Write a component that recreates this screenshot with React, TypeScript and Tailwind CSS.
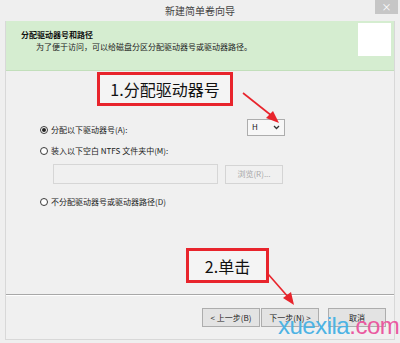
import React from "react";

const Radio = ({ checked }: { checked?: boolean }) => (
  <span className="w-[8px] h-[8px] rounded-full border border-[#3a3a3a] bg-white flex items-center justify-center shrink-0">
    {checked && <span className="w-[4px] h-[4px] rounded-full bg-[#222]" />}
  </span>
);

const Btn = ({ children, className = "" }: { children: React.ReactNode; className?: string }) => (
  <div
    className={
      "w-[58px] h-[19px] border border-[#adadad] bg-[#e3e3e3] flex items-center justify-center text-[8px] text-[#222] " +
      className
    }
  >
    {children}
  </div>
);

export default function App() {
  return (
    <div className="relative w-[400px] h-[343px] overflow-hidden bg-[#efefef] font-['Noto_Sans_CJK_SC','Noto_Sans',sans-serif] flex flex-col">
      {/* title bar */}
      <div className="relative h-[21px] shrink-0 flex items-center justify-center text-[10px] text-[#444]">
        新建简单卷向导
        <div className="absolute right-[2px] top-0 w-[23px] h-[14px] bg-[#c6c6c6] flex items-center justify-center text-white text-[10px] leading-none">
          ×
        </div>
      </div>

      {/* window body */}
      <div className="mx-[5px] mb-[3px] flex-1 flex flex-col border border-[#d8d8d8] border-t-0 bg-[#f0f0f0]">
        {/* header */}
        <div className="h-[50px] shrink-0 bg-[#d5edd0] border-b border-[#c2dfbb] flex justify-between pr-[3px] pt-[2px]">
          <div className="pl-[15px] pt-[7px] flex flex-col gap-[2px]">
            <div className="text-[8px] font-bold text-[#111] leading-[10px]">分配驱动器号和路径</div>
            <div className="pl-[15px] text-[8px] text-[#222] leading-[10px]">
              为了便于访问，可以给磁盘分区分配驱动器号或驱动器路径。
            </div>
          </div>
          <div className="w-[33px] h-[33px] bg-white" />
        </div>

        {/* content */}
        <div className="flex-1 pl-[34px] pt-[50px] flex flex-col text-[8px] text-[#222]">
          <div className="flex items-center h-[18px]">
            <Radio checked />
            <span className="ml-[3px] w-[196px]">分配以下驱动器号(A):</span>
            <div className="-mt-[6px] w-[38px] h-[17px] border border-[#adadad] bg-[#f7f7f7] flex items-center justify-between px-[4px] text-[8px]">
              <span>H</span>
              <svg width="7" height="5" viewBox="0 0 7 5">
                <path d="M1 1 L3.5 3.5 L6 1" stroke="#333" strokeWidth="1.3" fill="none" />
              </svg>
            </div>
          </div>
          <div className="flex items-center h-[10px] mt-[7px]">
            <Radio />
            <span className="ml-[3px]">装入以下空白 NTFS 文件夹中(M):</span>
          </div>
          <div className="flex items-center mt-[8px] pl-[13px] gap-[7px]">
            <div className="w-[165px] h-[20px] border border-[#d6d6d6] bg-[#f0f0f0]" />
            <div className="w-[58px] h-[19px] border border-[#d4d4d4] bg-[#f0f0f0] flex items-center justify-center text-[#a8a8a8]">
              浏览(R)...
            </div>
          </div>
          <div className="flex items-center h-[10px] mt-[13px]">
            <Radio />
            <span className="ml-[3px]">不分配驱动器号或驱动器路径(D)</span>
          </div>
        </div>

        {/* separator */}
        <div className="h-[2px] shrink-0 border-t border-[#a8a8a8] border-b border-b-white" />

        {/* footer */}
        <div className="h-[43px] shrink-0 flex items-start pt-[12px] pl-[196px]">
          <Btn>&lt; 上一步(B)</Btn>
          <Btn className="ml-[1px]">下一步(N) &gt;</Btn>
          <Btn className="ml-[9px]">取消</Btn>
        </div>
      </div>

      {/* annotation 1 */}
      <div className="absolute left-[97px] top-[72px] w-[136px] h-[34px] border-[3px] border-[#e8242c] bg-[#f4f4f4] flex items-center justify-center text-[16px] text-[#111]">
        1.分配驱动器号
      </div>
      {/* annotation 2 */}
      <div className="absolute left-[186px] top-[248px] w-[83px] h-[35px] border-[3px] border-[#e8242c] bg-[#f4f4f4] flex items-center justify-center text-[16px] text-[#111]">
        2.单击
      </div>

      {/* arrows */}
      <svg className="absolute left-0 top-0 pointer-events-none" width="400" height="343">
        <line x1="243" y1="93" x2="272" y2="116" stroke="#e8242c" strokeWidth="1.6" />
        <polygon points="279,123 266,118 273,111" fill="#e8242c" />
        <line x1="268" y1="274" x2="289" y2="298" stroke="#e8242c" strokeWidth="1.6" />
        <polygon points="294,305 283,298 291,292" fill="#e8242c" />
      </svg>

      {/* watermark */}
      <div className="absolute left-[278px] top-[314px] text-[24px] leading-none tracking-[-0.5px] font-['Liberation_Sans',Arial,sans-serif]">
        <span className="text-[#4db3e4]">xuexila</span>
        <span className="text-[#ea5aa0]">.com</span>
      </div>
    </div>
  );
}
